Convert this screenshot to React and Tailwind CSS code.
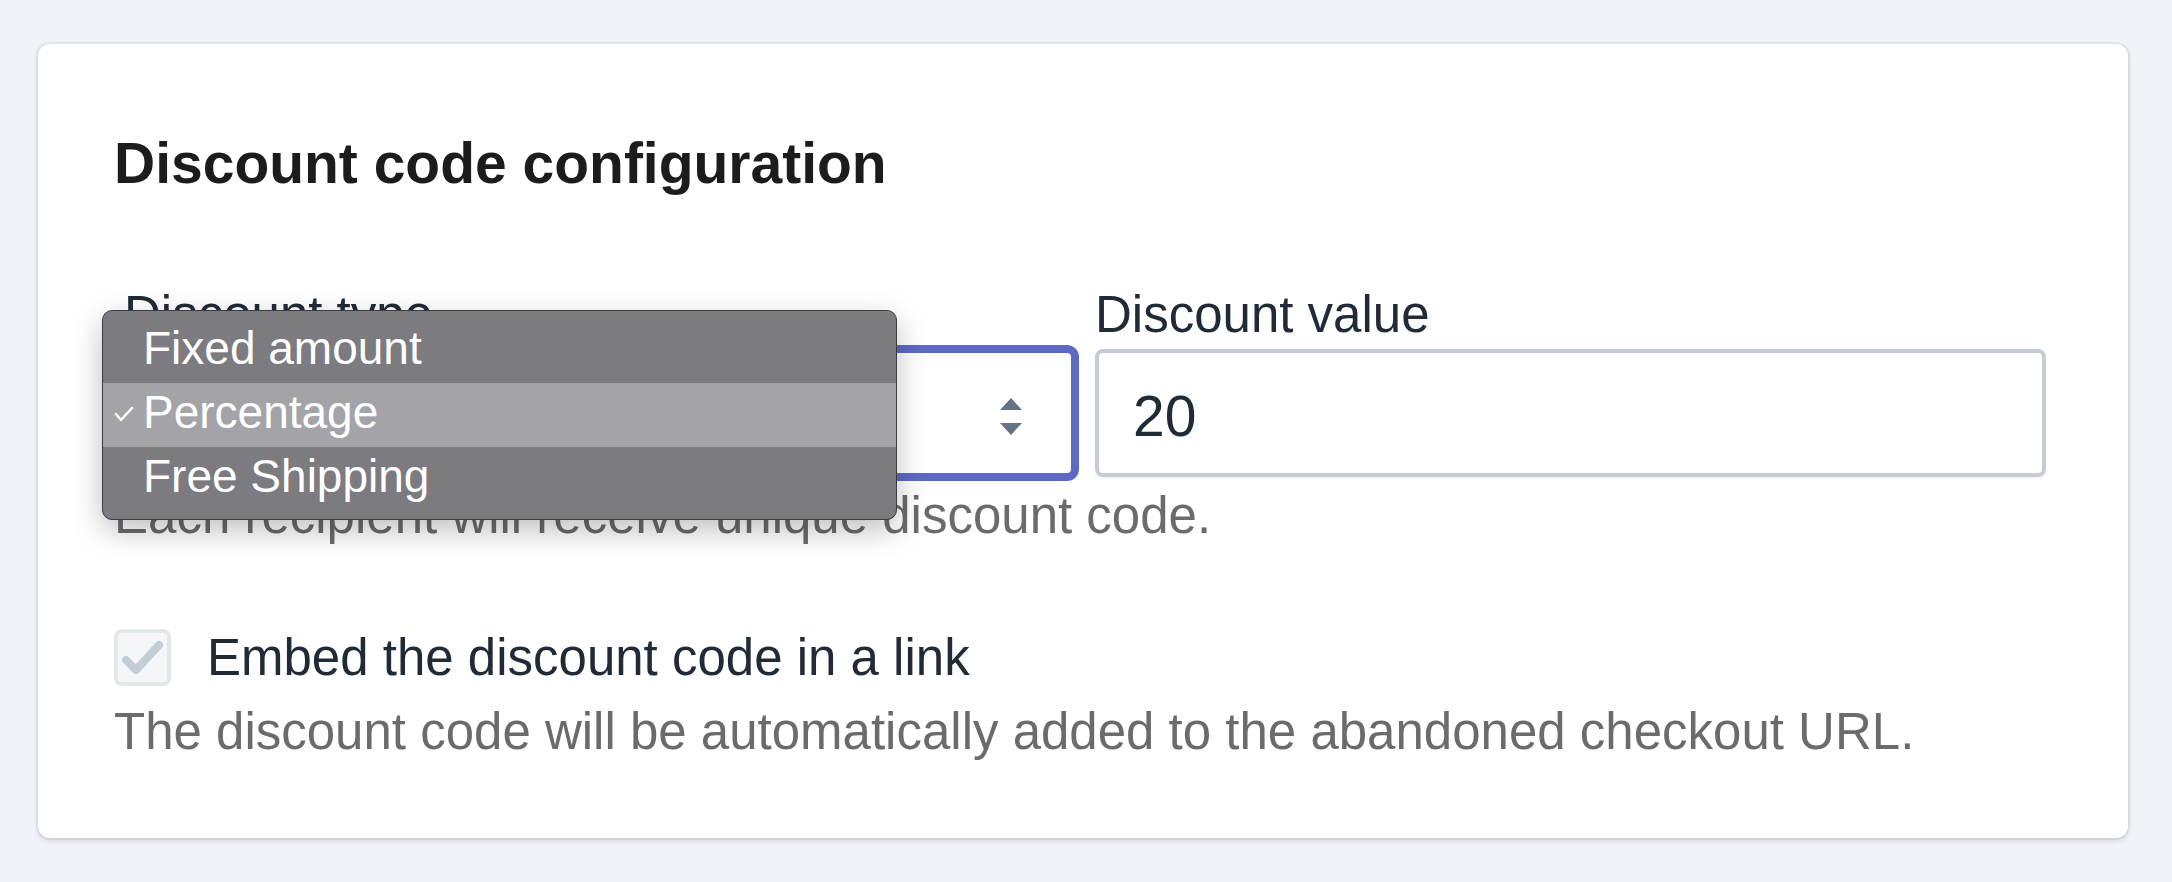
import React from 'react';

const font = { fontFamily: '"Liberation Sans", Arial, sans-serif' };

function Arrows(){
  return (
    <svg width="22" height="37" viewBox="0 0 22 37">
      <polygon points="0,12 11,0 22,12" fill="#637381" />
      <polygon points="0,25 22,25 11,37" fill="#637381" />
    </svg>
  );
}

function Check(){
  return (
    <svg width="49" height="49" viewBox="0 0 49 49">
      <polyline points="8,27 18,37 41,12" fill="none" stroke="#c4cdd5" strokeWidth="8" strokeLinecap="round" strokeLinejoin="round" />
    </svg>
  );
}

export default function App(){
  return (
    <div className="min-h-screen bg-[#f0f3f7] pt-[44px] pl-[38px] pr-[44px] pb-[44px]" style={font}>
      <div className="relative bg-white rounded-[12px] shadow-[0_0_0_2px_rgba(63,63,68,0.07),0_3px_6px_0_rgba(63,63,68,0.14)] pt-[91px] pl-[76px] pr-[82px] pb-[81px]">
        <h2 className="text-[57px] leading-[57px] font-bold text-[#1c1c1c]">Discount code configuration</h2>

        <div className="grid grid-cols-2 gap-[20px] ml-[10px] mt-[97px]">
          <div>
            <div className="text-[51px] leading-[51px] text-[#212b36] mb-[9px]">Discount type</div>
            <div className="h-[128px] border-[4px] border-[#5c6ac4] rounded-[8px] shadow-[0_0_0_4px_#5c6ac4] bg-white flex items-center justify-between pl-[18px] pr-[49px] pt-[6px]">
              <span className="text-[57px] leading-[57px] text-[#212b36]">Percentage</span>
              <Arrows />
            </div>
          </div>
          <div>
            <div className="text-[51px] leading-[51px] text-[#212b36] mb-[9px]">Discount value</div>
            <div className="h-[128px] border-[4px] border-[#c4cdd5] rounded-[8px] bg-white shadow-[0_2px_2px_rgba(0,0,0,0.05)] flex items-center pl-[34px] pt-[6px]">
              <span className="text-[57px] leading-[57px] text-[#212b36]">20</span>
            </div>
          </div>
        </div>

        <p className="mt-[13px] text-[51px] leading-[51px] text-[#6b6b6b]">Each recipient will receive unique discount code.</p>

        <label className="mt-[88px] flex items-center gap-[36px]">
          <span className="w-[57px] h-[57px] rounded-[8px] border-[4px] border-[#e3e7eb] bg-[#f4f6f8] flex items-center justify-center">
            <Check />
          </span>
          <span className="text-[51px] leading-[51px] text-[#212b36]">Embed the discount code in a link</span>
        </label>
        <p className="mt-[20px] text-[51px] leading-[51px] text-[#6b6b6b]">The discount code will be automatically added to the abandoned checkout URL.</p>

        {/* native select popup, open over the select */}
        <div className="absolute left-[64px] top-[266px] w-[795px] py-[8px] rounded-[10px] bg-[#7b7b80] border border-[#3c3c40] shadow-[0_10px_30px_rgba(0,0,0,0.25)] text-white text-[46px]">
          <div className="h-[64px] flex items-center pl-[40px] pb-[6px]">Fixed amount</div>
          <div className="relative h-[64px] flex items-center pl-[40px] pb-[6px] bg-[#a4a4a8]">
            <svg className="absolute left-[11px] top-[23px]" width="20" height="16" viewBox="0 0 20 16">
              <polyline points="2,8 7,14 18,2" fill="none" stroke="white" strokeWidth="2.5" strokeLinecap="round" strokeLinejoin="round" />
            </svg>
            Percentage
          </div>
          <div className="h-[64px] flex items-center pl-[40px] pb-[6px]">Free Shipping</div>
        </div>
      </div>
    </div>
  );
}
